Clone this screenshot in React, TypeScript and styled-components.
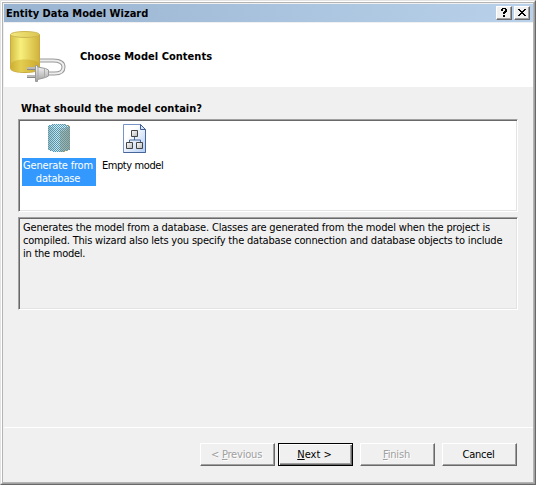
import React from "react";
import styled, { createGlobalStyle } from "styled-components";

const GlobalStyle = createGlobalStyle`
  * { box-sizing: border-box; }
  html, body { margin: 0; background: #fff; overflow: hidden; }
  body { font: 11px/13px Tahoma, "DejaVu Sans Condensed", "DejaVu Sans", sans-serif; font-stretch: condensed; color: #000; }
`;

const Window = styled.div`
  width: 536px;
  height: 485px;
  border: 1px solid;
  border-color: #e3e3e3 #696969 #696969 #e3e3e3;
`;

const Bevel = styled.div`
  height: 100%;
  border: 1px solid;
  border-color: #fff #a0a0a0 #a0a0a0 #fff;
`;

const Frame = styled.div`
  height: 100%;
  display: flex;
  flex-direction: column;
  background: #f0f0f0;
  border: 1px solid #b4b4b4;
  padding: 1px 0 0 1px;
`;

const TitleBar = styled.header`
  height: 18px;
  flex: none;
  display: flex;
  align-items: center;
  padding: 0 3px 0 2px;
  background: linear-gradient(90deg, #99b4d1, #b9d1ea);
`;

const Spaced = styled.span<{ $gap?: number }>`
  letter-spacing: ${(p) => p.$gap ?? 0}px;
  white-space: nowrap;
`;

const Title = styled(Spaced)`
  flex: 1;
  font-weight: bold;
`;

const CaptionButton = styled.button`
  width: 16px;
  height: 14px;
  margin-left: 2px;
  padding: 0;
  display: grid;
  place-items: center;
  background: #f0f0f0;
  border: 1px solid;
  border-color: #fff #696969 #696969 #fff;
  box-shadow: inset -1px -1px #a0a0a0;
`;

const Banner = styled.section`
  height: 64px;
  flex: none;
  display: flex;
  align-items: center;
  margin-top: 1px;
  padding-left: 4px;
  background: #fff;
  font-weight: bold;
`;

const BannerText = styled(Spaced)`
  margin: 2px 0 0 12px;
`;

const Content = styled.main`
  flex: 1;
  padding: 15px 15px 0 14px;
`;

const Question = styled.h2`
  margin: 0 0 4px 3px;
  font-size: 11px;
  line-height: 13px;
`;

const Sunken = styled.div<{ $fill: string }>`
  height: 93px;
  border: 1px solid;
  border-color: #a0a0a0 #fff #fff #a0a0a0;
  background: ${(p) => p.$fill};
  box-shadow: inset 1px 1px #696969, inset -1px -1px #e3e3e3;
`;

const Choices = styled(Sunken)`
  display: flex;
  gap: 2px;
  padding: 2px 3px;
`;

const Choice = styled.div`
  width: 74px;
  display: flex;
  flex-direction: column;
  align-items: center;
`;

const ChoiceLabel = styled.div<{ $selected?: boolean }>`
  width: 100%;
  height: 28px;
  margin-top: 4px;
  padding: 1px 2px 0 0;
  text-align: center;
  color: ${(p) => (p.$selected ? "#fff" : "#000")};
  background: ${(p) => (p.$selected ? "#3399ff" : "transparent")};
`;

const Description = styled(Sunken)`
  margin-top: 5px;
  padding: 3px 4px;
`;

const Line = styled(Spaced)`
  display: block;
`;

const Footer = styled.footer`
  height: 55px;
  flex: none;
  display: flex;
  align-items: flex-start;
  padding: 15px 16px 0 0;
  justify-content: flex-end;
  border-top: 1px solid #fff;
`;

const PushButton = styled.button<{ $default?: boolean; $left?: number }>`
  width: 75px;
  height: 23px;
  margin-left: ${(p) => p.$left ?? 7}px;
  padding: 0 2px 0 0;
  font: inherit;
  color: #000;
  background: #f0f0f0;
  border: 1px solid;
  border-color: ${(p) => (p.$default ? "#000" : "#fff #696969 #696969 #fff")};
  box-shadow: ${(p) =>
    p.$default
      ? "inset 1px 1px #fff, inset -1px -1px #696969, inset -2px -2px #a0a0a0"
      : "inset -1px -1px #a0a0a0"};
  &:disabled {
    color: #a0a0a0;
    text-shadow: 1px 1px #fff;
  }
`;

const Mnemonic = styled.span`
  text-decoration: underline;
  text-underline-offset: 1px;
  text-decoration-thickness: 1px;
`;

const DatabasePlug = () => (
  <svg width="60" height="60" viewBox="0 0 60 60">
    <defs>
      <linearGradient id="gold">
        <stop offset="0" stopColor="#d3bd45" />
        <stop offset=".35" stopColor="#f8f07c" />
        <stop offset="1" stopColor="#d0b23c" />
      </linearGradient>
      <linearGradient id="goldTop">
        <stop offset="0" stopColor="#f3e87e" />
        <stop offset="1" stopColor="#dcc650" />
      </linearGradient>
      <linearGradient id="steel" x2="0" y2="1">
        <stop offset="0" stopColor="#fafafa" />
        <stop offset="1" stopColor="#a0a0a0" />
      </linearGradient>
    </defs>
    <path d="M2.500 9.500v34c0 2.500 6.500 4 14.500 4s14.500-1.500 14.500-4v-34" fill="url(#gold)" stroke="#c9ab42" />
    <path d="M3 38.500c3-5.500 25-5.500 28 0v5c-2 4.500-26 4.500-28 0z" fill="#c59c13" opacity=".4" />
    <ellipse cx="17" cy="9.500" rx="14.500" ry="3" fill="url(#goldTop)" stroke="#cdb651" />
    <path d="M32 35.500h13c7 0 10.500 2.500 10.500 6.500s-3 6.500-9 6.500H40" fill="none" stroke="#999" strokeWidth="4" />
    <path d="M32 35.500h13c7 0 10.500 2.500 10.500 6.500s-3 6.500-9 6.500H40" fill="none" stroke="#eee" strokeWidth="2" />
    <path d="M19 43.500h9M19 51.500h9" stroke="#888" strokeWidth="3" />
    <path d="M19 43h9M19 51h9" stroke="#eee" />
    <path d="M27.500 40.500h2v1.500l8 1.500 3 1.500v6l-3 1.500-8 2v2h-2z" fill="url(#steel)" stroke="#999" />
    <path d="M30 42v12M36.500 44v9" stroke="#aaa" />
  </svg>
);

const ditherDots = Array.from({ length: 32 * 16 }, (_, i) => {
  const y = Math.floor(i / 16);
  const x = (i % 16) * 2 + ((y + 1) % 2);
  return `M${x} ${y}h1v1h-1z`;
}).join("");

const drumShape = "M6 3h3V2h14v1h3v1h1v24h-2v1h-3v1H10v-1H7v-1H5V4h1z";

const SelectedDatabase = () => (
  <svg width="32" height="32" viewBox="0 0 32 32" shapeRendering="crispEdges">
    <defs>
      <linearGradient id="drum">
        <stop offset="0" stopColor="#c8bd70" />
        <stop offset=".4" stopColor="#ebe5a0" />
        <stop offset="1" stopColor="#cda03c" />
      </linearGradient>
      <clipPath id="drumClip"><path d={drumShape} /></clipPath>
    </defs>
    <path d={drumShape} fill="url(#drum)" />
    <path d="M17 9h7V7h3v21h-2v1h-3v1h-5z" fill="#cba136" opacity=".6" />
    <path d="M7 4h4V3h11v1h3v1h-3v1H10V5H7z" fill="#f6f0b8" />
    <path d={ditherDots} fill="#3399ff" clipPath="url(#drumClip)" />
  </svg>
);

const ModelPage = () => (
  <svg width="32" height="32" viewBox="0 0 32 32">
    <defs>
      <linearGradient id="paper" x2="1" y2="1">
        <stop offset=".3" stopColor="#fff" />
        <stop offset="1" stopColor="#b3cdf5" />
      </linearGradient>
      <linearGradient id="node" x2="1" y2="1">
        <stop offset="0" stopColor="#fff" />
        <stop offset="1" stopColor="#b7b7b7" />
      </linearGradient>
    </defs>
    <path d="M4.500 2.500h17l5 5v23h-22z" fill="url(#paper)" stroke="#7893c5" />
    <path d="M21.500 2.500v5h5z" fill="#d5e4fa" stroke="#415f91" />
    <path d="M26.500 8v22.500h-22" fill="none" stroke="#466598" />
    <path d="M15.500 14v4M10.500 21v-3h11v3" fill="none" stroke="#466598" />
    <g fill="url(#node)" stroke="#444">
      <path d="M12.500 8.500h6v6h-6z" />
      <path d="M7.500 20.500h6v6h-6z" />
      <path d="M17.500 20.500h6v6h-6z" />
    </g>
  </svg>
);

const HelpGlyph = () => (
  <svg width="12" height="10" viewBox="0 0 12 10" shapeRendering="crispEdges">
    <path d="M4 0h4v1h1v3H8v1H7v1H5V4h1V3h1V1H5v2H3V1h1zM5 7h2v2H5z" />
  </svg>
);

const CloseGlyph = () => (
  <svg width="12" height="10" viewBox="0 0 12 10" shapeRendering="crispEdges">
    <path d="M2 1h2v1h1v1h2V2h1V1h2v1H9v1H8v1H7v1h1v1h1v1h1v1H8V7H7V6H5v1H4v1H2V7h1V6h1V5h1V4H4V3H3V2H2z" />
  </svg>
);

export default function App() {
  return (
    <>
      <GlobalStyle />
      <Window>
        <Bevel>
          <Frame>
            <TitleBar>
              <Title>Entity Data Model Wizard</Title>
              <CaptionButton aria-label="Help"><HelpGlyph /></CaptionButton>
              <CaptionButton aria-label="Close"><CloseGlyph /></CaptionButton>
            </TitleBar>
            <Banner>
              <DatabasePlug />
              <BannerText $gap={0.03}>Choose Model Contents</BannerText>
            </Banner>
            <Content>
              <Question><Spaced $gap={0.02}>What should the model contain?</Spaced></Question>
              <Choices $fill="#fff">
                <Choice>
                  <SelectedDatabase />
                  <ChoiceLabel $selected>
                    <Line $gap={-0.2}>Generate from</Line>
                    <Line $gap={-0.2}>database</Line>
                  </ChoiceLabel>
                </Choice>
                <Choice>
                  <ModelPage />
                  <ChoiceLabel><Line $gap={-0.4}>Empty model&nbsp;</Line></ChoiceLabel>
                </Choice>
              </Choices>
              <Description $fill="#f0f0f0">
                <Line $gap={-0.175}>Generates the model from a database. Classes are generated from the model when the project is</Line>
                <Line $gap={-0.193}>compiled. This wizard also lets you specify the database connection and database objects to include</Line>
                <Line $gap={-0.25}>in the model.</Line>
              </Description>
            </Content>
            <Footer>
              <PushButton disabled><Spaced $gap={-0.2}>&lt; <Mnemonic>P</Mnemonic>revious</Spaced></PushButton>
              <PushButton $default $left={3}><Spaced><Mnemonic>N</Mnemonic>ext &gt;</Spaced></PushButton>
              <PushButton disabled><Spaced $gap={-0.15}><Mnemonic>F</Mnemonic>inish</Spaced></PushButton>
              <PushButton><Spaced $gap={-0.25}>Cancel</Spaced></PushButton>
            </Footer>
          </Frame>
        </Bevel>
      </Window>
    </>
  );
}
